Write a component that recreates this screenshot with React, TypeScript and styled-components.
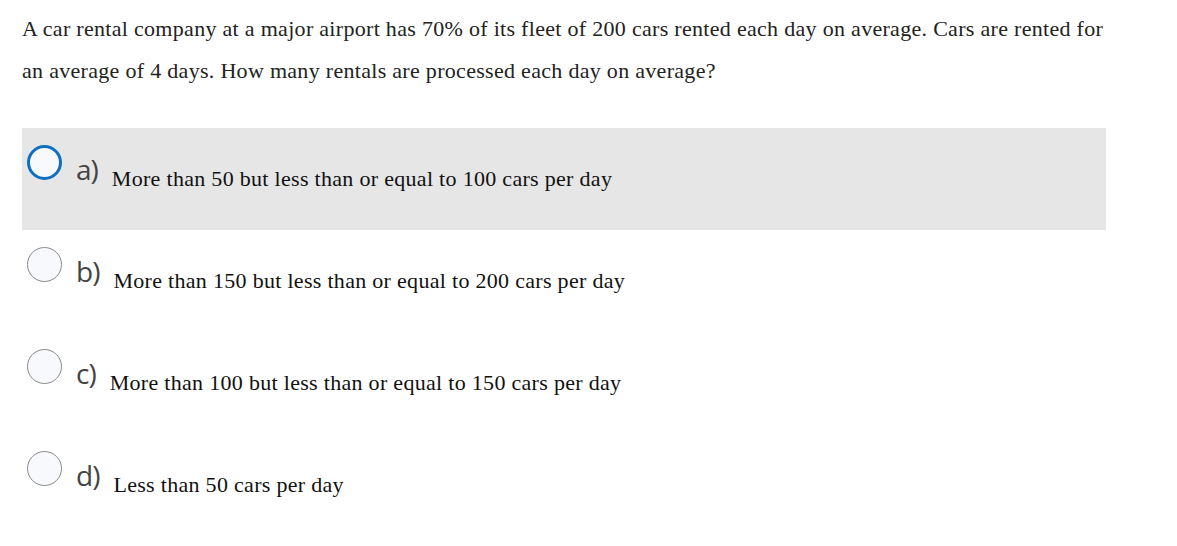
import React from "react";
import styled, {createGlobalStyle} from "styled-components";

const GlobalStyle = createGlobalStyle`
    body {
        margin: 0;
        background: #fff;
    }
`;

const options = [
    {key: "a", text: "More than 50 but less than or equal to 100 cars per day", selected: true},
    {key: "b", text: "More than 150 but less than or equal to 200 cars per day", selected: false},
    {key: "c", text: "More than 100 but less than or equal to 150 cars per day", selected: false},
    {key: "d", text: "Less than 50 cars per day", selected: false},
];

const App: React.FC = () => {
    return (
        <Wrap>
            <GlobalStyle/>
            <Question>
                A car rental company at a major airport has 70% of its fleet of 200 cars rented each day on average. Cars
                are rented for an average of 4 days. How many rentals are processed each day on average?
            </Question>
            <OptionList>
                {options.map(o => (
                    <OptionRow key={o.key} $selected={o.selected}>
                        <Radio $selected={o.selected}/>
                        <Letter>{o.key})</Letter>
                        <OptionText>{o.text}</OptionText>
                    </OptionRow>
                ))}
            </OptionList>
        </Wrap>
    );
};

export default App;

const Wrap = styled.div`
    width: 1084px;
    padding: 8px 0 0 22px;
    display: flex;
    flex-direction: column;
`;

const Question = styled.p`
    margin: 0;
    width: 1092px;
    font-family: "Liberation Serif", "Times New Roman", serif;
    font-size: 22px;
    letter-spacing: 0.3px;
    line-height: 42px;
    color: #222;
`;

const OptionList = styled.div`
    margin-top: 36px;
    display: flex;
    flex-direction: column;
`;

const OptionRow = styled.div<{ $selected: boolean }>`
    height: 102px;
    box-sizing: border-box;
    padding: 17px 0 0 5px;
    display: flex;
    align-items: flex-start;
    background: ${p => p.$selected ? "#e6e6e6" : "transparent"};
`;

const Radio = styled.span<{ $selected: boolean }>`
    flex: none;
    width: 35px;
    height: 35px;
    box-sizing: border-box;
    border-radius: 50%;
    background: #f8f9fd;
    border: ${p => p.$selected ? "3px solid #0f6fc0" : "1px solid #8a8a8a"};
`;

const Letter = styled.span`
    margin: 6px 0 0 14px;
    font-family: "Open Sans", "Liberation Sans", sans-serif;
    font-size: 28px;
    letter-spacing: -1px;
    line-height: 36px;
    color: #444;
`;

const OptionText = styled.span`
    margin: 22px 0 0 14px;
    font-family: "Liberation Serif", "Times New Roman", serif;
    font-size: 22px;
    letter-spacing: 0.3px;
    line-height: 24px;
    color: #111;
`;
